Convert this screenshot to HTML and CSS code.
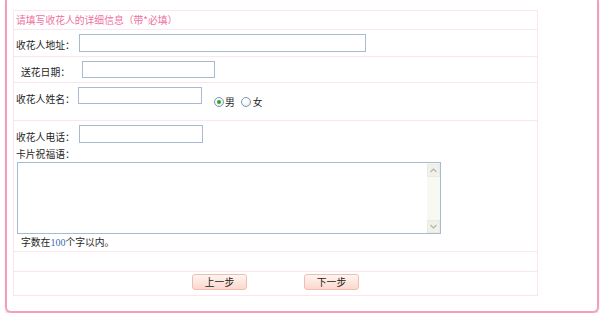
FILE: index.html
```html
<!DOCTYPE html>
<html>
<head>
<meta charset="utf-8" />
<title>收花人信息</title>
<link rel="stylesheet" href="styles.css">
</head>
<body>
<div class="wrap">
	<form class="form" name="flowerform">
		<div class="row tip">请填写收花人的详细信息（带*必填）</div>
		<div class="row r-addr">
			<span class="lab">收花人地址：</span>
			<input type="text" class="txt" name="address" />
		</div>
		<div class="row r-date">
			<span class="lab">送花日期：</span>
			<input type="text" class="txt" name="date" />
		</div>
		<div class="row r-name">
			<span class="lab">收花人姓名：</span>
			<input type="text" class="txt" name="name" />
			<span class="sex">
				<span class="radio on"><i></i>男</span>
				<span class="radio"><i></i>女</span>
			</span>
		</div>
		<div class="row r-note">
			<div class="line">
				<span class="lab">收花人电话：</span>
				<input type="text" class="txt" name="phone" />
			</div>
			<div class="card">卡片祝福语：</div>
			<div class="note_box">
				<textarea name="note"></textarea>
				<div class="sb">
					<span class="sb_btn"><svg width="7" height="5" viewBox="0 0 7 5"><polyline points="0.5,4 3.5,1 6.5,4" fill="none" stroke="#b4b4ac" stroke-width="1.2"/></svg></span>
					<span class="sb_btn"><svg width="7" height="5" viewBox="0 0 7 5"><polyline points="0.5,1 3.5,4 6.5,1" fill="none" stroke="#b4b4ac" stroke-width="1.2"/></svg></span>
				</div>
			</div>
			<div class="count">字数在<em>100</em>个字以内。</div>
		</div>
		<div class="row r-blank"></div>
		<div class="row r-btn">
			<input type="button" class="btn prev" value="上一步" />
			<input type="button" class="btn next" value="下一步" />
		</div>
	</form>
</div>
</body>
</html>
```

FILE: styles.css
```css
*{ margin:0; padding:0;}
body{ font:9.8px/12px "Noto Sans CJK SC", "Liberation Sans", sans-serif; color:#1e1e1e; background:#fff;}
.wrap{ width:594px; box-sizing:border-box; margin-left:5px; border:2px solid #f59cc0; border-top:none; border-radius:0 0 6px 6px; padding:10px 0 15px 6px; box-shadow:0 2px 2px #dcdcdc;}
.form{ width:525px; box-sizing:border-box; border:1px solid #fbe6ee;}
.row{ display:flex; align-items:flex-start; border-bottom:1px solid #fbe6ee; padding-left:2px;}
.row:last-child{ border-bottom:none;}
.txt{ box-sizing:border-box; border:1px solid #a6bbd2; background:#fff; padding:0 3px; font:inherit; outline:none;}

.tip{ height:18px; line-height:18px; color:#ef70a1;}

.r-addr{ height:26px;}
.r-addr .lab{ width:63px; margin-top:9px;}
.r-addr .txt{ width:287px; height:18px; margin-top:4px;}

.r-date{ height:25px; padding-left:7px;}
.r-date .lab{ width:61px; margin-top:9px;}
.r-date .txt{ width:133px; height:17px; margin-top:4px;}

.r-name{ height:37px;}
.r-name .lab{ width:62px; margin-top:10px;}
.r-name .txt{ width:124px; height:17px; margin-top:4px;}
.sex{ display:flex; margin:13px 0 0 12px;}
.radio{ display:flex; align-items:center;}
.radio + .radio{ margin-left:6px;}
.radio i{ width:8px; height:8px; border:1px solid #7d97b3; border-radius:50%; background:radial-gradient(circle at 40% 35%, #fff 30%, #dedede 100%); margin-right:2px; display:flex; align-items:center; justify-content:center;}
.radio.on i{ margin-right:1px;}
.radio.on i:after{ content:""; width:4px; height:4px; border-radius:50%; background:#25a825;}

.r-note{ height:130px; display:block;}
.line{ display:flex; align-items:flex-start; height:22px;}
.line .lab{ width:63px; margin-top:10px;}
.line .txt{ width:124px; height:18px; margin-top:4px;}
.card{ margin-top:5px;}
.note_box{ display:flex; width:424px; height:72px; box-sizing:border-box; border:1px solid #a6bbd2; margin:2px 0 0 1px;}
.note_box textarea{ flex:1; border:none; resize:none; outline:none; font:inherit; padding:2px;}
.sb{ width:13px; background:#f9f9f3; display:flex; flex-direction:column; justify-content:space-between; padding:1px 0 0 0;}
.sb_btn{ width:11px; height:11px; border:1px solid #ebebe2; background:#f1f1ea; display:flex; align-items:center; justify-content:center;}
.count{ margin-top:2px; padding-left:5px;}
.count em{ font-style:normal; font-family:"Liberation Serif", serif; font-size:10px; color:#3a6db5;}

.r-blank{ height:19px;}

.r-btn{ height:23px;}
.btn{ width:55px; height:16px; box-sizing:border-box; border:1px solid #efbdb2; border-radius:3px; background:linear-gradient(#fff4f0, #fbd8ce); font:inherit; line-height:13px; color:#222; margin-top:2px;}
.prev{ margin-left:176px;}
.next{ margin-left:57px;}
```
